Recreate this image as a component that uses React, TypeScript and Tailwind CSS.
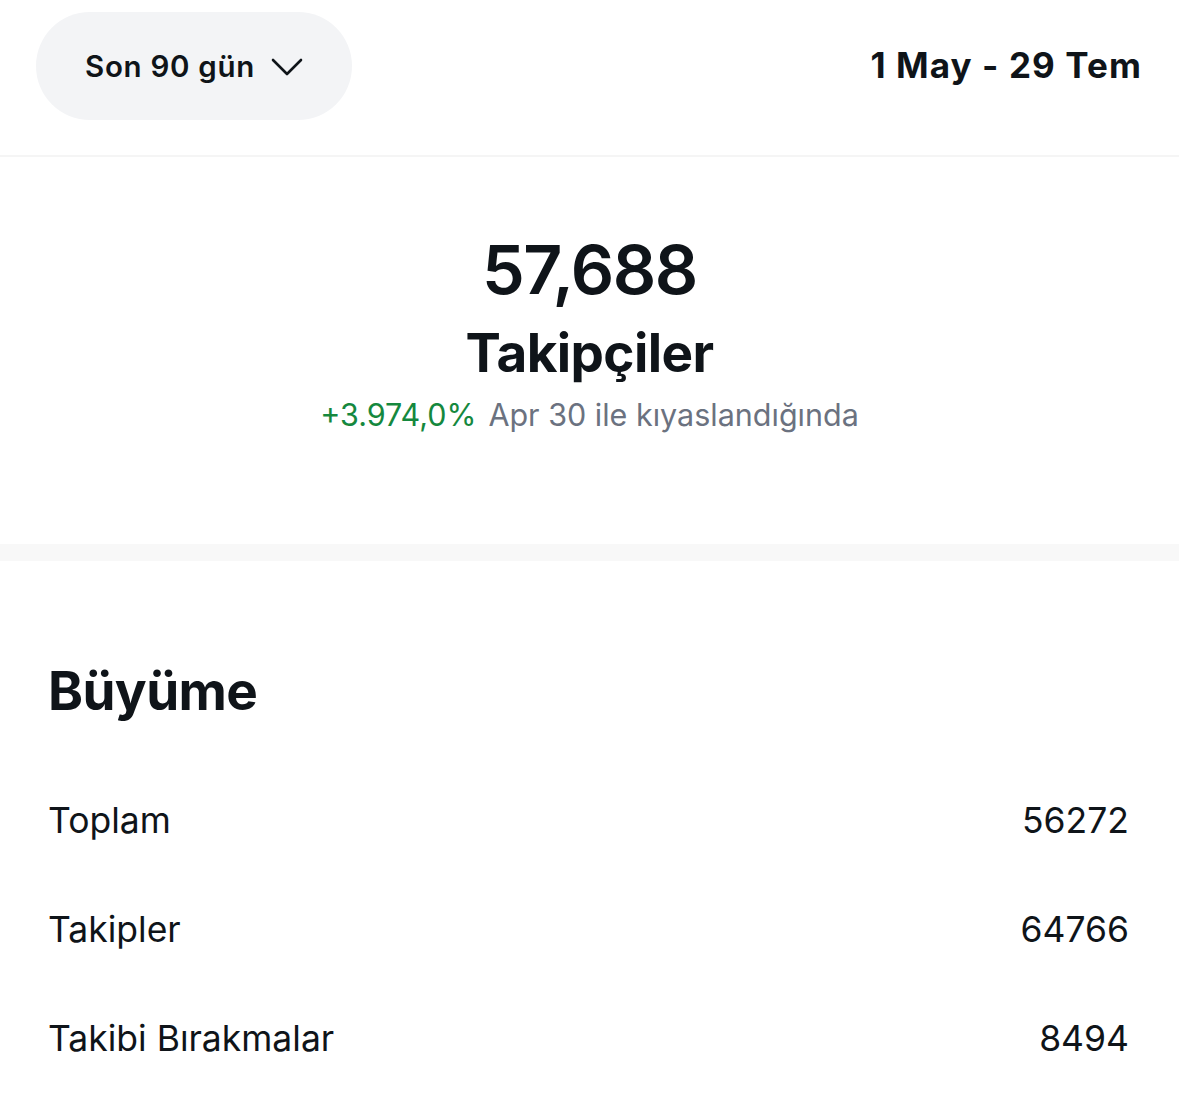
const rows = [
  { label: 'Toplam', value: '56272' },
  { label: 'Takipler', value: '64766' },
  { label: 'Takibi Bırakmalar', value: '8494' },
];

export default function App() {
  return (
    <div
      className="w-[1179px] h-[1109px] bg-white text-[#0f1419] overflow-hidden"
      style={{ fontFamily: 'Inter, "Noto Sans", sans-serif' }}
    >
      {/* üst bar */}
      <div className="h-[155px] flex items-start justify-between pl-[36px] pr-[37px] pt-[12px]">
        <button className="h-[108px] w-[316px] rounded-full bg-[#f3f4f6] flex items-center pl-[49px] gap-[16px]">
          <span className="text-[29.5px] font-semibold tracking-[0.7px]">Son 90 gün</span>
          <svg width="32" height="18" viewBox="0 0 32 18" fill="none" className="mt-[1px]">
            <polyline
              points="2,2 16,16 30,2"
              stroke="#0f1419"
              strokeWidth="2.6"
              strokeLinecap="round"
              strokeLinejoin="round"
            />
          </svg>
        </button>
        <div className="h-[108px] flex items-center text-[35px] font-bold tracking-[1.1px] pb-[2px]">
          1 May - 29 Tem
        </div>
      </div>
      <div className="h-[2px] bg-[#f5f5f5]" />

      {/* takipçi özeti */}
      <div className="h-[387px] flex flex-col items-center pt-[72px]">
        <div className="text-[68px] leading-[80px] font-semibold tracking-[-1.5px]">57,688</div>
        <div className="text-[53px] leading-[64px] font-bold tracking-[-0.6px] mt-[12px]">Takipçiler</div>
        <div className="text-[30.5px] leading-[40px] mt-[10px]">
          <span className="text-[#15883e]">+3.974,0%</span>
          <span className="text-[#6b7280] ml-[12px]">Apr 30 ile kıyaslandığında</span>
        </div>
      </div>
      <div className="h-[17px] bg-[#f8f8f8]" />

      {/* büyüme */}
      <div className="pl-[48px] pr-[50px] pt-[100px]">
        <h2 className="text-[53px] leading-[60px] font-bold tracking-[-0.6px]">Büyüme</h2>
        <div className="mt-[45px]">
          {rows.map((row) => (
            <div key={row.label} className="h-[109px] flex items-center justify-between text-[35.5px]">
              <span>{row.label}</span>
              <span>{row.value}</span>
            </div>
          ))}
        </div>
      </div>
    </div>
  );
}
